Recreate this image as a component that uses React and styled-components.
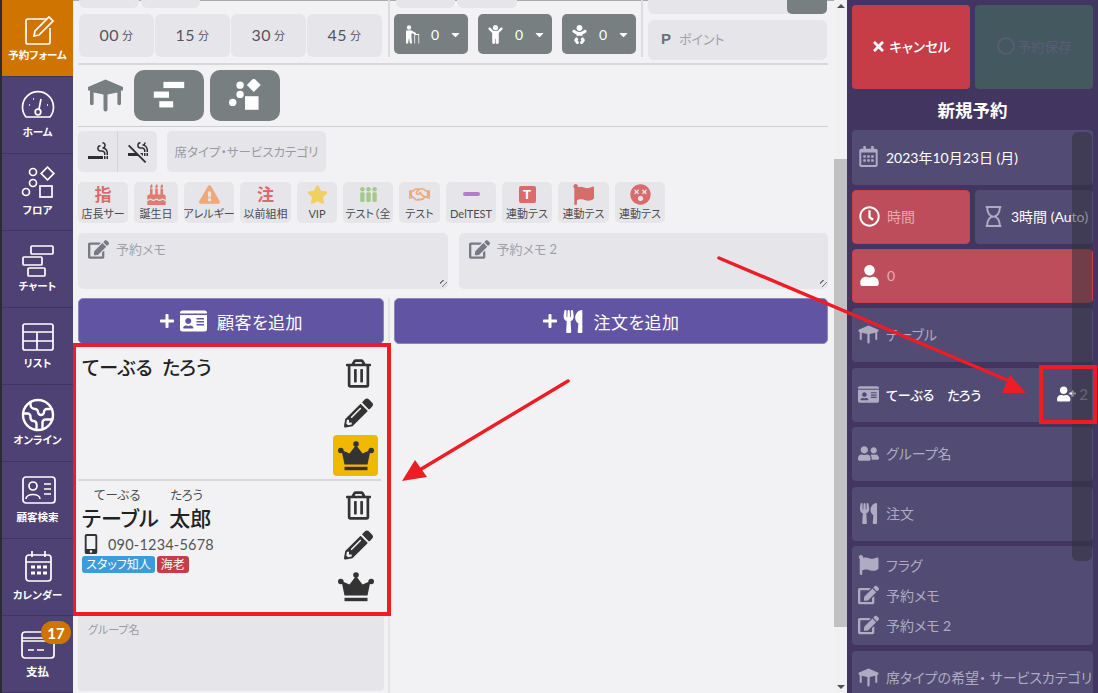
import React from "react";
import styled, { createGlobalStyle } from "styled-components";
import {
  FaPencilAlt, FaRegTrashAlt, FaEdit, FaRegClock, FaRegHourglass, FaUser, FaIdCard, FaUserFriends,
  FaUtensils, FaFlag, FaMobileAlt, FaUserPlus, FaTimes, FaRegCircle, FaRegCalendarAlt, FaPlus,
  FaStar, FaExclamationTriangle, FaBirthdayCake, FaRegHandshake, FaDizzy, FaChild, FaBaby, FaCaretDown,
} from "react-icons/fa";
import { MdSmokingRooms, MdSmokeFree } from "react-icons/md";
import { Earth } from "lucide-react";

const Global = createGlobalStyle`
  html, body { margin: 0; padding: 0; height: 693px; overflow: hidden; background: #2c2c34; }
  * { box-sizing: border-box; }
  body { font-family: "Lato", "Noto Sans CJK JP", sans-serif; font-feature-settings: "palt"; }
`;

const Page = styled.div`
  position: relative; width: 1098px; height: 693px; display: flex; overflow: hidden; padding-left: 2px;
`;

/* Sidebar */
const Sidebar = styled.nav`width: 71px; flex: none; display: flex; flex-direction: column; background: #4d4273;`;
const NavItem = styled.div`
  height: 77px; flex: none; display: flex; flex-direction: column; align-items: center; justify-content: flex-start;
  padding-top: ${p => p.$pt}px; position: relative; color: #fff;
  background: ${p => (p.$active ? "#d07400" : "#4d4273")};
  border-bottom: 1px solid #3f3560;
`;
const NavIcon = styled.svg`width: 36px; height: 36px; flex: none; fill: none; stroke: #fff; stroke-width: 1.7;`;
const NavLabel = styled.span`font-size: ${p => p.$fs || 10.5}px; font-weight: 700; line-height: 14px; margin-top: ${p => p.$mt}px; white-space: nowrap;`;
const Badge = styled.span`
  position: absolute; top: 5px; left: 39px; width: 30px; height: 23px; border-radius: 12px; background: #d07400;
  font-size: 15px; font-weight: 700; color: #fff; display: flex; align-items: center; justify-content: center;
`;

/* Main */
const Main = styled.main`width: 761px; flex: none; background: #f2f2f5; padding: 0 6px 0 5px; height: 693px; overflow: hidden; box-shadow: inset 0 1px 0 #aaa;`;
const Top = styled.div`display: flex; height: 65px; border-bottom: 2px solid #d8d8d8; margin: 0 0 4px;`;
const TopCol = styled.div`width: ${p => p.$w}px; flex: none; display: flex; flex-direction: column;`;
const VLine = styled.div`width: 2px; flex: none; background: #dcdcdf; height: 57px; margin: 0 ${p => p.$r}px 0 ${p => p.$l}px;`;
const CutRow = styled.div`display: flex; gap: 2px; height: 8px; margin-bottom: 6px; padding-left: ${p => p.$pl || 1}px;`;
const CutChip = styled.div`width: ${p => p.$w}px; background: #e6e6ea; border-radius: 0 0 6px 6px;`;
const TimeRow = styled.div`display: flex; gap: 1px; padding-left: 1px;`;
const TimeBtn = styled.div`
  width: 75px; height: 43px; background: #e6e6ea; border-radius: 6px; display: flex; align-items: center; justify-content: center;
  font-size: 16px; color: #55555c; letter-spacing: .5px; padding-bottom: 2px;
  small { font-size: 11px; margin-left: 3px; }
`;
const GuestRow = styled.div`display: flex; gap: 10px;`;
const GuestBtn = styled.div`
  width: 74px; height: 40px; background: #777f80; border-radius: 5px; display: flex; align-items: center; color: #fff; padding-left: 9px; font-size: 14px;
  svg:first-child { width: 17px; height: 19px; flex: none; }
  b { font-weight: 400; margin-left: 11px; }
  svg:last-child { width: 13px; height: 13px; margin-left: 10px; }
`;
const ElderIcon = styled.svg`fill: #fff;`;
const PointTop = styled.div`height: 14px; background: #e6e6ea; border-radius: 0 0 6px 6px; display: flex; justify-content: flex-end; margin-bottom: 6px;`;
const PointTab = styled.div`width: 40px; background: #777f80; border-radius: 0 0 5px 5px;`;
const PointBox = styled.div`height: 40px; background: #e6e6ea; border-radius: 6px; display: flex; align-items: center; padding: 0 0 4px 13px; font-size: 13px; color: #a0a0a8; gap: 8px;
  b { font-size: 15px; color: #6c7080; font-family: "Liberation Sans", sans-serif; }
`;

const Tabs = styled.div`display: flex; align-items: center; height: 52px; gap: 6px; padding-left: 9px;`;
const TableIcon = styled.svg`width: ${p => p.$w}px; height: ${p => p.$h}px; margin-right: ${p => p.$mr || 0}px; fill: ${p => p.$c || "#777f80"}; flex: none;`;
const TabBtn = styled.div`width: 70px; height: 51px; background: #777f80; border-radius: 10px; display: flex; align-items: center; justify-content: center;
  svg { width: 36px; height: 32px; fill: #fff; }
`;
const Rule = styled.hr`border: 0; height: 1px; background: #cfcfd3; margin: 5px 0 4px;`;
const SeatRow = styled.div`display: flex; gap: 10px; height: 41px;`;
const SmokeGroup = styled.div`width: 79px; background: #e6e6ea; border-radius: 5px; display: flex;
  div { flex: 1; display: flex; align-items: center; justify-content: center; color: #2f2f33; font-size: 24px; }
  div:first-child { border-right: 1px solid #d4d4d8; }
`;
const SeatType = styled.div`width: 159px; background: #e6e6ea; border-radius: 5px; display: flex; align-items: center; justify-content: center; font-size: 12.5px; color: #9a9aa2; white-space: nowrap;`;
const FlagRow = styled.div`display: flex; gap: 6px; margin-top: 10px; height: 41px;`;
const FlagChip = styled.div`
  width: ${p => p.$w}px; flex: none; background: #e6e6ea; border-radius: 5px; overflow: hidden; display: flex; flex-direction: column; align-items: center; padding-top: 2px;
  color: ${p => p.$c};
  svg { height: 21px; width: 21px; flex: none; }
`;
const FlagGlyph = styled.span`height: 21px; font-size: 17px; line-height: 21px; font-weight: 700; flex: none;`;
const FlagText = styled.span`font-size: 11px; line-height: 15px; color: #4a4a50; white-space: nowrap; margin-top: 1px;`;
const TSquare = styled.span`width: 17px; height: 17px; margin: 2px 0 2px; background: #d96b6b; border-radius: 2px; color: #fff; font: 700 13px/17px "Liberation Sans", sans-serif; text-align: center; flex: none;`;
const Bar = styled.span`width: 17px; height: 4px; border-radius: 2px; background: #b27cc9; margin: 8px 0 9px; flex: none;`;
const MemoRow = styled.div`display: flex; gap: 11px; margin-top: 10px; height: 56px;`;
const Memo = styled.div`
  flex: 1; position: relative; background: #e6e6ea; border-radius: 5px; padding: 6px 10px; display: flex; align-items: flex-start; gap: 7px; font-size: 13px; color: #a0a0a8;
  svg { width: 21px; height: 21px; color: #777a85; flex: none; }
  span { line-height: 20px; }
  &::after { content: ""; position: absolute; right: 1px; bottom: 2px; width: 7px; height: 7px; background: repeating-linear-gradient(135deg, transparent 0 2px, #777 2px 3px, transparent 3px 4px); }
`;
const Lower = styled.div`display: flex; margin-top: 9px;`;
const LeftCol = styled.div`width: 306px; flex: none;`;
const RightCol = styled.div`flex: 1; padding-left: 10px; position: relative;`;
const Divider = styled.div`position: absolute; left: 4px; top: 0; width: 2px; height: 420px; background: #e4e4e8;`;
const AddBtn = styled.div`
  height: 46px; background: #6155a3; border-radius: 5px; border: 1px solid #8d84bd; color: #fff; display: flex; align-items: center; justify-content: center; font-size: 17px; letter-spacing: .5px;
  span { margin-left: 10px; }
`;
const PlusIcon = styled(FaPlus)`width: 16px; height: 16px; margin-right: 5px;`;
const CardIcon = styled(FaIdCard)`width: 27px; height: 24px;`;
const ForkIcon = styled(FaUtensils)`width: 20px; height: 23px;`;
const CustomerBox = styled.section`
  position: relative; z-index: 2; margin: -1px -7px 0 -6px; height: 273px; border: 4px solid #ee1c25; background: #f2f2f5; padding: 0 6px 0 2px;
`;
const Card = styled.div`display: flex; height: ${p => p.$h}px; border-bottom: ${p => (p.$line ? "2px solid #d8d8dc" : "0")}; padding: ${p => p.$pt}px 0 0 4px;`;
const CardBody = styled.div`flex: 1; min-width: 0; color: #222;`;
const Actions = styled.div`width: 45px; flex: none; display: flex; flex-direction: column; align-items: center; color: #333; margin: ${p => p.$mt}px 3px 0 0;
  > svg { width: 25px; height: 29px; flex: none; margin-left: 5px; }
`;
const PencilWrap = styled.div`margin: 10px 0 0 5px; height: 30px; display: flex;
  svg { width: 29px; height: 30px; }
`;
const CrownBtn = styled.div`margin-top: ${p => p.$mt}px; width: 45px; height: 41px; border-radius: 4px; display: flex; align-items: center; justify-content: center; background: ${p => (p.$on ? "#f0b800" : "transparent")};
  svg { width: 36px; height: 32px; fill: #333; }
`;
const Kana = styled.div`font-size: 19px; font-weight: 500; line-height: 28px; white-space: pre; margin-top: 4px;`;
const Ruby = styled.div`font-size: 12.5px; line-height: 14px; color: #4a4a4f; display: flex; padding-left: 12px; gap: 30px; margin-top: 6px;`;
const Name = styled.div`font-size: 21px; font-weight: 500; line-height: 26px; white-space: pre; margin-top: 2px;`;
const Phone = styled.div`display: flex; align-items: center; font-size: 14.5px; color: #555; height: 22px; letter-spacing: .2px; gap: 8px; margin-top: 2px;
  svg { width: 18px; height: 20px; color: #333; }
`;
const Tags = styled.div`display: flex; gap: 2px; margin-top: 1px;`;
const Tag = styled.span`font-size: 12px; line-height: 17px; color: #fff; background: ${p => p.$c}; padding: 0 4px; border-radius: 3px;`;
const GroupBox = styled.div`margin-top: -2px; height: 77px; background: #e6e6ea; border-radius: 4px; padding: 7px 10px; font-size: 11px; color: #9a9aa2;`;

/* Page scrollbar */
const Scroll = styled.div`width: 13px; flex: none; background: #f1f1f1; display: flex; flex-direction: column; align-items: center; justify-content: space-between; position: relative; padding: 4px 0;`;
const Arrow = styled.i`width: 0; height: 0; border-left: 4px solid transparent; border-right: 4px solid transparent; ${p => (p.$up ? "border-bottom: 4px solid #505050;" : "border-top: 4px solid #505050;")}`;
const Thumb = styled.div`position: absolute; left: 0; right: 0; top: 159px; height: 468px; background: #c1c1c1;`;

/* Right panel */
const Panel = styled.aside`flex: 1; min-width: 0; background: #42355f; padding: 5px 5px 0; display: flex; flex-direction: column; gap: 5px; position: relative; overflow: hidden; color: #fff;`;
const Split = styled.div`display: flex; gap: 5px; flex: none;`;
const BigBtn = styled.div`flex: 1; height: 84px; border-radius: 4px; padding-bottom: 2px; background: ${p => p.$bg}; color: ${p => p.$c}; display: flex; align-items: center; justify-content: center; gap: 3px; font-size: 13.5px; font-weight: ${p => p.$fw || 400}; white-space: nowrap;
  svg { width: ${p => p.$s}px; height: ${p => p.$s}px; flex: none; }
`;
const Title = styled.h1`margin: 0; padding-top: 4px; flex: none; height: 31px; text-align: center; font-size: 17.5px; line-height: 25px; font-weight: 700;`;
const Item = styled.div`
  flex: ${p => (p.$half ? 1 : "none")}; height: ${p => p.$h || 54}px; margin-top: ${p => p.$mt || 0}px; border-radius: 4px; display: flex; align-items: center; padding: 0 0 2px ${p => p.$pl || 6}px; gap: 7px; font-size: 14px; white-space: nowrap; overflow: hidden;
  background: ${p => (p.$red ? "#bd4d5a" : "#524b73")};
  color: ${p => (p.$strong ? "#fff" : p.$red ? "#e9a9ae" : "#aeabc2")};
  border: ${p => (p.$red ? "1px solid #c6414a" : "0")};
  svg { width: 21px; height: 21px; flex: none; color: ${p => (p.$iconc || "#aeabc2")}; }
`;
const ItemEnd = styled.div`margin-left: auto; margin-right: 5px; display: flex; align-items: center; gap: 3px; color: #aaa; font-size: 15px;
  svg { width: 19px; height: 16px; color: #fff; }
`;
const NameText = styled.span`font-size: 13px; font-weight: 500;`;
const Stack = styled.div`flex: none; height: 99px; background: #524b73; border-radius: 4px; padding: 4px 0 0 6px; display: flex; flex-direction: column; color: #aeabc2; font-size: 14px;`;
const StackLine = styled.div`height: 30px; display: flex; align-items: center; gap: 7px; svg { width: 21px; height: 20px; color: #aeabc2; flex: none; }`;
const OverlayScroll = styled.div`position: absolute; left: 225px; top: 132px; width: 20px; height: 429px; border-radius: 6px; background: rgba(50, 50, 60, .55); z-index: 1;`;

/* Annotation layer */
const Notes = styled.svg`position: absolute; inset: 0; width: 1098px; height: 693px; z-index: 5; pointer-events: none;`;
const NoteBox = styled.div`position: absolute; left: 1039px; top: 365px; width: 58px; height: 59px; border: 4px solid #ee1c25; z-index: 5;`;

const TableGlyph = () => (
  <path d="M18.5 0 L1 7.5 V11 H3 V24 a1.8 1.8 0 0 0 3.6 0 V13 L16.5 15 V30 a2 2 0 0 0 4 0 V15 L30.4 13 V24 a1.8 1.8 0 0 0 3.6 0 V11 H36 V7.5 Z" />
);
const ChartGlyph = () => (<g><rect x="9" y="2" width="15" height="4.5" /><rect x="2" y="9" width="11" height="4.5" /><rect x="6" y="16" width="10" height="4.5" /></g>);
const FloorGlyph = () => (<g><circle cx="10" cy="5" r="3" /><circle cx="10" cy="12.5" r="3" /><circle cx="4" cy="19" r="3" /><rect x="17" y="0.8" width="8" height="8" transform="rotate(45 21 5)" /><rect x="14" y="14" width="11" height="11" /></g>);
const CrownGlyph = () => (
  <g><circle cx="18" cy="3" r="2.8" /><circle cx="2.8" cy="9.5" r="2.8" /><circle cx="33.2" cy="9.5" r="2.8" />
  <path d="M18 4 L24.5 12.5 L32.5 9 L29.5 23.5 H6.5 L3.5 9 L11.5 12.5 Z" /><rect x="6.5" y="25.8" width="23" height="3.4" /></g>
);

const flags = [
  { w: 50, c: "#d96b6b", g: "指", t: "店長サー" }, { w: 44, c: "#e07b70", i: <FaBirthdayCake />, t: "誕生日" },
  { w: 50, c: "#f0a878", i: <FaExclamationTriangle />, t: "アレルギー" }, { w: 51, c: "#d96b6b", g: "注", t: "以前組相" },
  { w: 40, c: "#efd060", i: <FaStar />, t: "VIP" }, { w: 50, c: "#a5c98a", people: true, t: "テスト（全" },
  { w: 41, c: "#f0a878", i: <FaRegHandshake />, t: "テスト" }, { w: 50, c: "#b27cc9", bar: true, t: "DelTEST" },
  { w: 50, c: "#d96b6b", T: true, t: "連動テス" }, { w: 51, c: "#d96b6b", i: <FaFlag />, t: "連動テス" },
  { w: 50, c: "#d96b6b", i: <FaDizzy />, t: "連動テス" },
];

const nav = [
  { l: "予約フォーム", active: true, pt: 13, mt: -1, i: <g><path d="M27 6 H8 a2 2 0 0 0-2 2 V29 a2 2 0 0 0 2 2 H28 a2 2 0 0 0 2-2 V15" /><path d="M14 23 l1-5 L29 4 l4 4 L19 22 Z" /></g> },
  { l: "ホーム", pt: 11, mt: 1, i: <g><path d="M6 29 A15.5 15.5 0 1 1 30 29 Z" /><circle cx="18" cy="24" r="2.8" /><path d="M19 21 L21 11 M9 17 h1 M13 11 h1 M27 17 h1" /></g> },
  { l: "フロア", pt: 12, mt: 1, i: <g><circle cx="13" cy="6" r="3.5" /><circle cx="13" cy="17" r="3.5" /><circle cx="6" cy="26" r="3.5" /><rect x="23" y="3" width="9" height="9" transform="rotate(45 27.5 7.5)" /><rect x="20" y="20" width="12" height="11" /></g> },
  { l: "チャート", pt: 12, mt: 0, i: <g><rect x="11" y="3" width="22" height="8" rx="1" /><rect x="3" y="14" width="19" height="8" rx="1" /><rect x="8" y="25" width="17" height="8" rx="1" /></g> },
  { l: "リスト", pt: 12, mt: 0, i: <g><rect x="3" y="4" width="30" height="26" rx="2" /><path d="M3 12 H33 M3 21 H33 M17 12 V30" /></g> },
  { l: "オンライン", pt: 12, mt: 0, earth: true },
  { l: "顧客検索", pt: 10, mt: 2, i: <g><rect x="3" y="5" width="32" height="26" rx="3" /><circle cx="13" cy="14" r="4" /><path d="M6 27 c0-6 14-6 14 0 M24 12 h7 M24 17 h7 M24 22 h7" /></g> },
  { l: "カレンダー", pt: 10, mt: 3, i: <g><rect x="6" y="6" width="25" height="26" rx="3" /><path d="M6 13 H31 M12 2 V8 M25 2 V8" /><path d="M11 18 h4 M17 18 h4 M23 18 h4 M11 24 h4 M17 24 h4 M23 24 h4" strokeWidth="3" /></g> },
  { l: "支払", pt: 13, mt: 0, fs: 11.5, badge: "17", i: <g><rect x="2" y="3" width="32" height="26" rx="3" /><path d="M2 9 H34 M2 12 H34 M8 21 h6 M17 21 h7" /></g> },
];

const Elder = () => (
  <ElderIcon viewBox="0 0 17 19">
    <circle cx="6" cy="2.5" r="2.2" />
    <path d="M3 5.5 L8 5.2 L13 8 V9.6 L8.5 8.3 V12 L9 18.5 H7 L6 13 L5 18.5 H3 Z" />
    <path d="M11.3 9 V18.5 H12.1 V10 H15.4 V18.5 H16.2 V9 Z" />
  </ElderIcon>
);

export default function App() {
  return (
    <Page>
      <Global />
      <Sidebar>
        {nav.map(n => (
          <NavItem key={n.l} $active={n.active} $pt={n.pt}>
            {n.earth ? <Earth size={36} strokeWidth={1.6} /> : <NavIcon viewBox="0 0 36 36">{n.i}</NavIcon>}
            <NavLabel $mt={n.mt} $fs={n.fs}>{n.l}</NavLabel>
            {n.badge && <Badge>{n.badge}</Badge>}
          </NavItem>
        ))}
      </Sidebar>

      <Main>
        <Top>
          <TopCol $w={306}>
            <CutRow><CutChip $w={60} /><CutChip $w={59} /></CutRow>
            <TimeRow>
              {["00", "15", "30", "45"].map(m => <TimeBtn key={m}>{m}<small>分</small></TimeBtn>)}
            </TimeRow>
          </TopCol>
          <VLine $l={4} $r={4} />
          <TopCol $w={245}>
            <CutRow $pl={2}><CutChip $w={59} /><CutChip $w={60} /></CutRow>
            <GuestRow>
              <GuestBtn><Elder /><b>0</b><FaCaretDown /></GuestBtn>
              <GuestBtn><FaChild /><b>0</b><FaCaretDown /></GuestBtn>
              <GuestBtn><FaBaby /><b>0</b><FaCaretDown /></GuestBtn>
            </GuestRow>
          </TopCol>
          <VLine $l={2} $r={5} />
          <TopCol $w={179}>
            <PointTop><PointTab /></PointTop>
            <PointBox><b>P</b>ポイント</PointBox>
          </TopCol>
        </Top>

        <Tabs>
          <TableIcon $w={37} $h={33} $mr={4} viewBox="0 0 37 32"><TableGlyph /></TableIcon>
          <TabBtn><svg viewBox="0 0 26 23"><ChartGlyph /></svg></TabBtn>
          <TabBtn><svg viewBox="0 0 28 26"><FloorGlyph /></svg></TabBtn>
        </Tabs>
        <Rule />
        <SeatRow>
          <SmokeGroup><div><MdSmokingRooms /></div><div><MdSmokeFree /></div></SmokeGroup>
          <SeatType>席タイプ・サービスカテゴリ</SeatType>
        </SeatRow>
        <FlagRow>
          {flags.map((f, i) => (
            <FlagChip key={i} $w={f.w} $c={f.c}>
              {f.g && <FlagGlyph>{f.g}</FlagGlyph>}
              {f.i}
              {f.T && <TSquare>T</TSquare>}
              {f.bar && <Bar />}
              {f.people && <svg viewBox="0 0 24 24" fill="currentColor"><circle cx="5" cy="6" r="2.6" /><circle cx="12" cy="6" r="2.6" /><circle cx="19" cy="6" r="2.6" /><rect x="2.5" y="9.5" width="5" height="11" rx="1.5" /><rect x="9.5" y="9.5" width="5" height="11" rx="1.5" /><rect x="16.5" y="9.5" width="5" height="11" rx="1.5" /></svg>}
              <FlagText>{f.t}</FlagText>
            </FlagChip>
          ))}
        </FlagRow>
        <MemoRow>
          <Memo><FaEdit /><span>予約メモ</span></Memo>
          <Memo><FaEdit /><span>予約メモ 2</span></Memo>
        </MemoRow>

        <Lower>
          <LeftCol>
            <AddBtn><PlusIcon /><CardIcon /><span>顧客を追加</span></AddBtn>
            <CustomerBox>
              <Card $h={134} $line $pt={3}>
                <CardBody><Kana>{"てーぶる  たろう"}</Kana></CardBody>
                <Actions $mt={9}>
                  <FaRegTrashAlt />
                  <PencilWrap><FaPencilAlt /></PencilWrap>
                  <CrownBtn $on $mt={7}><svg viewBox="0 0 36 30"><CrownGlyph /></svg></CrownBtn>
                </Actions>
              </Card>
              <Card $h={131} $pt={2}>
                <CardBody>
                  <Ruby><span>てーぶる</span><span>たろう</span></Ruby>
                  <Name>{"テーブル  太郎"}</Name>
                  <Phone><FaMobileAlt />090-1234-5678</Phone>
                  <Tags><Tag $c="#3c9bd8">スタッフ知人</Tag><Tag $c="#c63d47">海老</Tag></Tags>
                </CardBody>
                <Actions $mt={8}>
                  <FaRegTrashAlt />
                  <PencilWrap><FaPencilAlt /></PencilWrap>
                  <CrownBtn $mt={6}><svg viewBox="0 0 36 30"><CrownGlyph /></svg></CrownBtn>
                </Actions>
              </Card>
            </CustomerBox>
            <GroupBox>グループ名</GroupBox>
          </LeftCol>
          <RightCol>
            <Divider />
            <AddBtn><PlusIcon /><ForkIcon /><span>注文を追加</span></AddBtn>
          </RightCol>
        </Lower>
      </Main>

      <Scroll><Arrow $up /><Thumb /><Arrow /></Scroll>

      <Panel>
        <Split>
          <BigBtn $bg="#c63d47" $c="#fff" $s={15} $fw={500}><FaTimes />キャンセル</BigBtn>
          <BigBtn $bg="#44595f" $c="#5d5a78" $s={18}><FaRegCircle />予約保存</BigBtn>
        </Split>
        <Title>新規予約</Title>
        <OverlayScroll />
        <Item $strong $h={55}><FaRegCalendarAlt />2023年10月23日 (月)</Item>
        <Split>
          <Item $half $red $iconc="#fff"><FaRegClock />時間</Item>
          <Item $half $strong $pl={8}><FaRegHourglass />3時間 (Auto)</Item>
        </Split>
        <Item $red $iconc="#fff"><FaUser />0</Item>
        <Item><TableIcon $w={24} $h={21} $c="#aeabc2" viewBox="0 0 37 32"><TableGlyph /></TableIcon>テーブル</Item>
        <Item $strong $mt={1}>
          <FaIdCard /><NameText>{"てーぶる　たろう"}</NameText>
          <ItemEnd><FaUserPlus /> 2</ItemEnd>
        </Item>
        <Item><FaUserFriends />グループ名</Item>
        <Item $mt={1}><FaUtensils />注文</Item>
        <Stack>
          <StackLine><FaFlag />フラグ</StackLine>
          <StackLine><FaEdit />予約メモ</StackLine>
          <StackLine><FaEdit />予約メモ 2</StackLine>
        </Stack>
        <Item $mt={1}><TableIcon $w={24} $h={21} $c="#aeabc2" viewBox="0 0 37 32"><TableGlyph /></TableIcon>席タイプの希望・ サービスカテゴリ</Item>
      </Panel>

      <NoteBox />
      <Notes viewBox="0 0 1098 693">
        <line x1="719" y1="258" x2="1012" y2="382" stroke="#ee1c25" strokeWidth="3.5" strokeLinecap="round" />
        <polygon points="1026,393 1002,393 1010,375" fill="#ee1c25" />
        <line x1="568" y1="381" x2="418" y2="471" stroke="#ee1c25" strokeWidth="3.5" strokeLinecap="round" />
        <polygon points="402,481 415,460 427,477" fill="#ee1c25" />
      </Notes>
    </Page>
  );
}
